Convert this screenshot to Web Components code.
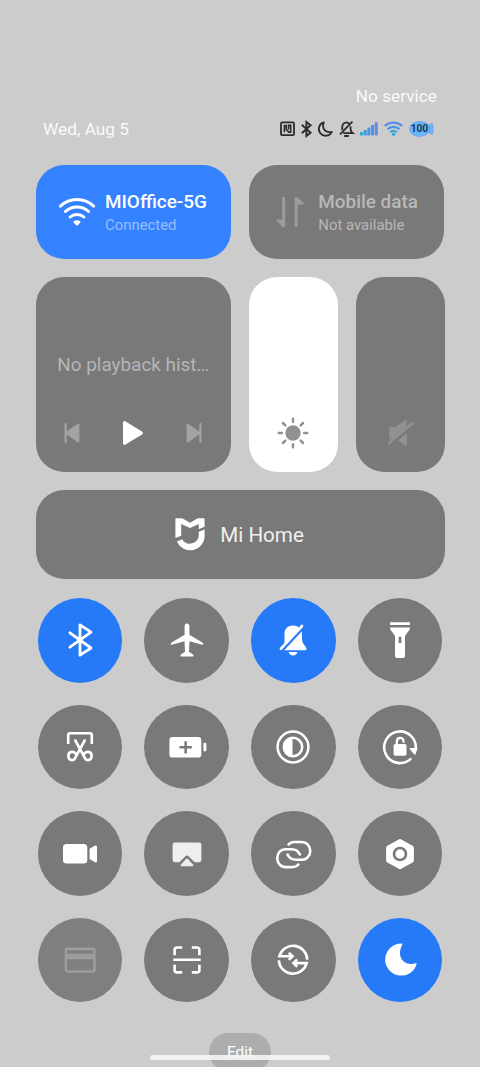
<!DOCTYPE html>
<html lang="en">
<head>
<meta charset="utf-8">
<title>Control center</title>
<style>
html,body{margin:0;padding:0;background:#ccc}
body{width:480px;height:1067px;overflow:hidden;font-family:Roboto,"Noto Sans",sans-serif}
</style>
</head>
<body>
<control-center></control-center>
<script>
const ICONS = {
  wifi:`<g fill="none" stroke="currentColor" stroke-width="3" stroke-linecap="round"><path d="M-16.6-5.9A24.2 24.2 0 0 1 16.6-5.9M-11.6-.5A17 17 0 0 1 11.6-.5M-6.9 5A10.4 10.4 0 0 1 6.9 5"/></g><path d="M-3.3 9.3Q0 7.2 3.3 9.3Q3.8 10 3.2 10.8L.8 13.2Q0 13.8-.8 13.2L-3.2 10.8Q-3.8 10-3.3 9.3z"/>`,
  data:`<path d="M-7.8-14.6q0-.7 1.5-.7t1.5.7V14.2q0 .9-1.4.9h-1.3L-13.6 8.6q-.8-1 .4-1.2h5.4zM4.7 14.4q0 .7 1.5.7t1.5-.7V-7.6h5.6q1-.3.3-1.3L7.4-14.7q-.4-.6-1.3-.6t-1.4.9z"/>`,
  prev:`<path d="M-7.5-8.9q0-1 1.1-1t1.1 1v7.5L5.8-9.2q1.5-.7 1.6.9V8.3q-.1 1.6-1.6.9L-5.3 1.6v7.5q0 1-1.1 1t-1.1-1z"/>`,
  play:`<path d="M-10-10.5Q-9.8-12.4-7.8-11.8L9-1.4Q11 0 9 1.4L-7.8 11.8Q-9.8 12.4-10 10.5z"/>`,
  sun:`<circle r="7.7"/><g stroke="currentColor" stroke-width="2.5" stroke-linecap="round"><path d="M0-11.2V-14.2M0 11.2V14.2M-11.2 0H-14.2M11.2 0H14.2M7.7-7.7 10-10M-7.7-7.7-10-10M7.7 7.7 10 10M-7.7 7.7-10 10"/></g>`,
  mute:`<path d="M-10.8-4.5Q-10.8-6.3-9-6.3H-4.3L5.3-12.8Q6.7-13.3 6.7-11.7V-6L-8.2 6.8Q-10.8 6.8-10.8 4zM6.7-.3V12q0 1.6-1.4.8L-2 7.3z"/><path d="M-11.2 10.3 12.3-9.7" stroke="currentColor" stroke-width="2.5" stroke-linecap="round"/>`,
  mi:`<path d="M-14.6-14.8Q-14.6-15.8-13.5-15.8H-9Q-8-15.8-7.3-15.4L0-11.3 7.3-15.4Q8-15.8 9-15.8H13.5Q14.6-15.8 14.6-14.8V-7.2L8.8-4.8V-10L0-5.9-8.8-10V1.8L-14.6 4.1z"/><path d="M14.6-4.5V1.2A14.4 14.4 0 0 1-13 7.6L-7.9 5.2A9 9 0 0 0 8.8.9V-2.2z"/>`,
  bluetooth:`<path d="M-10.1-7.2 11 8 0 15.2V-15.2L11-7.8-10.1 7.2" fill="none" stroke="currentColor" stroke-width="2.8" stroke-linejoin="round" stroke-linecap="round"/>`,
  plane:`<path d="M0-16.6Q2.4-16.6 2.4-13.7V-5.3L15.4 2.5Q16.7 3.5 16.2 5.1L2.5 1.3 2 11.8 6 14.5Q6.9 15.4 6.4 16.5H-6.4Q-6.9 15.4-6 14.5L-2 11.8-2.5 1.3-16.2 5.1Q-16.7 3.5-15.4 2.5L-2.4-5.3V-13.7Q-2.4-16.6 0-16.6z"/>`,
  scissors:`<g fill="none" stroke="currentColor" stroke-width="2.6" stroke-linecap="round"><path stroke-linecap="butt" d="M-11.8-3V-11.8Q-11.8-13.8-9.8-13.8H9.8Q11.8-13.8 11.8-11.8V-3"/><path d="M-4.7-6.5 3.2 7.8M4.7-6.5-3.2 7.8"/><path d="M3.4 7.8Q5.2 4.6 8.3 4.9C12.8 5.4 12.8 12.6 8 13.2C5 13.4 4.4 10.2 3.4 7.8zM-3.4 7.8Q-5.2 4.6-8.3 4.9C-12.8 5.4-12.8 12.6-8 13.2C-5 13.4-4.4 10.2-3.4 7.8z"/></g>`,
  battery:`<path fill-rule="evenodd" d="M-14.4-10H11Q14.3-10 14.3-6.8V7.4Q14.3 10.6 11 10.6H-14.4Q-17.6 10.6-17.6 7.4V-6.8Q-17.6-10-14.4-10zM-2.6-5.7V-.9H-7.5V1.6H-2.6V6.5H-.1V1.6H4.8V-.9H-.1V-5.7z"/><rect x="16.4" y="-4.2" width="3" height="8.6" rx="1.3"/>`,
  bell:`<path d="M6.2-12.3Q4-14.4 0-14.4C-5.8-14.4-8.5-10.8-8.5-6V4.5zM8.9-8.7V-1.5Q9 3 12.7 6.7Q13.8 8 13.3 9.7Q13.2 10.2 12.4 10.2H-8.7z"/><path d="M-12 8.7 9-14" fill="none" stroke="currentColor" stroke-width="2.7" stroke-linecap="round"/><path d="M-4.4 12H4.4Q3.5 15.4 0 15.4T-4.4 12z"/>`,
  torch:`<path fill-rule="evenodd" d="M-10-17.7H10V-14.9H-10zM-10-12.6H10Q10.1-10.5 8.6-9L5.8-5.3Q5-4 5-2.5V16Q5 18 3 18H-3Q-5 18-5 16V-2.5Q-5-4-5.8-5.3L-8.6-9Q-10.1-10.5-10-12.6zM-1.3-3.2V2.9H1.3V-3.2z"/>`,
  contrast:`<g fill="none" stroke="currentColor" stroke-width="2.5"><circle r="15.4"/><circle r="9.2"/></g><path d="M-.5-9.4V9.4A9.4 9.4 0 0 1-.5-9.4z"/>`,
  rotate:`<path d="M15.7 2A15.8 15.8 0 1 0 11.3 11.3" fill="none" stroke="currentColor" stroke-width="2.6"/><path d="M9.8 1H17.7L15.4 7.5Q15 8.2 14.3 7.5L9.6 2Q9.2 1.3 9.8 1z"/><rect x="-6.4" y="-3" width="12.9" height="11.8" rx="1.8"/><path d="M-3.2-2V-5.4Q-3-9.2.2-9.2T3.6-5.2" fill="none" stroke="currentColor" stroke-width="2.3" stroke-linecap="round"/>`,
  video:`<rect x="-17" y="-10" width="24.3" height="19.6" rx="3.6"/><path d="M9.6-5.3 15-8.5Q17-9 17-7.3V7Q17 8.9 15 8.2L9.6 4.9z"/>`,
  airplay:`<path d="M-12.2-11.4H12.2Q14.4-11.4 14.4-9.2V6Q14.4 8.2 12.2 8.2H7.6L1.3 2Q0 1.1-1.3 2L-7.6 8.2H-12.2Q-14.4 8.2-14.4 6V-9.2Q-14.4-11.4-12.2-11.4z"/><path d="M-.8 4.8Q0 4.1.8 4.8L6.2 10.8Q6.8 12.3 5.4 12.3H-5.4Q-6.8 12.3-6.2 10.8z"/>`,
  card:`<rect x="-14.1" y="-11.1" width="28.5" height="22.6" rx="2" fill="none" stroke="currentColor" stroke-width="2.6"/><rect x="-13" y="-6.3" width="26.5" height="5.6"/>`,
  scan:`<g fill="none" stroke="currentColor" stroke-width="2.6"><path d="M-12.4-4.8V-10Q-12.4-12.5-9.9-12.5H-4.8M12.4-4.8V-10Q12.4-12.5 9.9-12.5H4.8M-12.4 4.8V9.9Q-12.4 12.4-9.9 12.4H-4.8M12.4 4.8V9.9Q12.4 12.4 9.9 12.4H4.8M-13.7-.2H13.7"/></g>`,
  link:`<path d="M6 9.6Q3.8 13.1-1 13.1H-7C-18.5 13.1-18.8-4.8-7-4.8H-1.5C3.5-4.8 4.5-3.2 7.6 1.2M-5-8.6Q-3-12 1.5-12H8C20.5-12 20.2 5.8 8 5.8H3.5C-2 5.8-3.8 3.8-6-.4" fill="none" stroke="currentColor" stroke-width="2.6"/>`,
  nut:`<path fill-rule="evenodd" d="M-1.3-14.5Q0-15.3 1.3-14.5L12.6-8.3Q13.9-7.5 13.9-6V6.4Q13.9 7.8 12.6 8.5L1.3 14.8Q0 15.5-1.3 14.8L-12.6 8.5Q-13.9 7.8-13.9 6.4V-6Q-13.9-7.5-12.6-8.3zM0-7.3A7.3 7.3 0 1 0 0 7.3 7.3 7.3 0 1 0 0-7.3z"/><circle r="4.7"/>`,
  sync:`<path d="M14.2-.4A14.2 14.2 0 0 0-13.7-3.7H-.8M-4.2-7.3-.4-3.7-4.2-.1M-14.2.4A14.2 14.2 0 0 0 13.7 3.1H.8M4.2-.5.4 3.1 4.2 6.7" fill="none" stroke="currentColor" stroke-width="2.6"/>`,
  moon:`<path d="M1.6-16.4Q2.9-16.4 2.3-15.2C-4.3-3.5 4.3 7 15.4 3.2Q16.9 2.9 16.5 4.4A16 16 0 1 1 1.6-16.4z"/>`
};

const define = (name, css, html) => customElements.define(name, class extends HTMLElement {
  connectedCallback() {
    if (this.shadowRoot) return;
    const root = this.attachShadow({mode: 'open'});
    const t = document.createElement('template');
    t.innerHTML = `<style>${css}</style>${typeof html === 'function' ? html(this) : html}`;
    root.append(t.content.cloneNode(true));
  }
});

define('cc-icon', `:host{display:block;width:40px;height:40px;flex:none}svg{display:block;width:100%;height:100%;fill:currentColor;overflow:visible}`,
  el => `<svg viewBox="-20 -20 40 40">${ICONS[el.getAttribute('name')]}</svg>`);

define('cc-toggle', `:host{display:grid;place-items:center;width:84.6px;height:84.6px;border-radius:50%;background:#797979;color:#fff}
  :host([on]){background:#277af7}:host([disabled]){background:#7f7f7f;color:#9d9d9d}:host([soft]){color:#eee}`,
  el => `<cc-icon name="${el.getAttribute('icon')}"></cc-icon>`);

define('cc-tile', `:host{display:flex;align-items:center;box-sizing:border-box;height:94.6px;border-radius:28px;background:#797979;color:#b8b8b8;padding-left:21px}
  :host([on]){background:#3482ff;color:#fff}
  cc-icon{color:#9c9c9c}:host([on]) cc-icon{color:#fff}
  .t{display:flex;flex-direction:column;margin:3px 0 0 8.5px;white-space:nowrap}
  .a{font-size:18.9px;font-weight:500;line-height:24px}
  .b{font-size:14.9px;line-height:22px}
  :host([on]) .b{color:#97beff}`,
  el => `<cc-icon name="${el.getAttribute('icon')}"></cc-icon><div class="t"><span class="a"><slot></slot></span><span class="b"><slot name="sub"></slot></span></div>`);

define('cc-player', `:host{display:flex;flex-direction:column;box-sizing:border-box;height:195.4px;border-radius:28px;background:#797979;color:#b5b5b5;padding-top:76px}
  .m{padding-left:21.8px;font-size:18.9px;line-height:24px;white-space:nowrap}
  .c{display:flex;justify-content:space-between;padding:0 17px 0 16.5px;margin-top:36.5px;color:#a3a3a3}
  .n{transform:scaleX(-1)}.p{color:#fff}`,
  `<div class="m"><slot></slot></div><div class="c"><cc-icon name="prev"></cc-icon><cc-icon class="p" name="play"></cc-icon><cc-icon class="n" name="prev"></cc-icon></div>`);

define('cc-slider', `:host{display:flex;flex-direction:column;justify-content:flex-end;align-items:center;box-sizing:border-box;height:195.4px;border-radius:28px;background:#797979;color:#919191;padding-bottom:18.8px}
  :host([full]){background:#fff}`,
  el => `<cc-icon name="${el.getAttribute('icon')}"></cc-icon>`);

define('cc-home', `:host{display:flex;align-items:center;box-sizing:border-box;padding-left:134.5px;height:89.2px;border-radius:28px;background:#797979;color:#fff;font-size:20.6px}
  span{margin:2px 0 0 10.3px;color:#f0f0f0}`,
  `<cc-icon name="mi"></cc-icon><span><slot></slot></span>`);

define('cc-status', `:host{display:block;color:#fafafa;padding:0 7.5px;height:164.6px;box-sizing:border-box;padding-top:84px;white-space:nowrap}
  .s{text-align:right;font-size:17.3px;line-height:25px}
  .d{display:flex;align-items:center;justify-content:space-between;margin-top:7px;height:26px;font-size:17.3px}
  .i{display:flex;align-items:center;margin-right:3.8px;color:#2c2c2c}
  svg{display:block;fill:none;stroke:currentColor;height:18px;flex:none;overflow:visible}
  .l{display:grid;place-items:center;width:24.6px;height:18px;margin-left:6px}
  .l svg{grid-area:1/1}
  .l b{grid-area:1/1;z-index:1;font-size:10.2px;line-height:18px;font-weight:700;color:#1c3950;margin-right:3px}`,
  `<div class="s"><slot name="carrier"></slot></div>
  <div class="d"><span><slot name="date"></slot></span><div class="i">
   <svg width="15" viewBox="0 0 15 18"><rect x="1" y="2.4" width="13" height="12.8" rx="1.3" stroke-width="1.8"/><path d="M4.4 12.3V5.6H6.3V9.5L8.8 12.1H10.7V5.4H8.6V9.6" stroke-width="1.6"/></svg>
   <svg width="11" viewBox="0 0 11 18" style="margin-left:6.2px"><path d="M.8 4.8 9.6 12.8 5.4 16V2L9.6 5.2.8 13.2" stroke-width="1.9"/></svg>
   <svg width="15" viewBox="0 0 15 18" style="margin-left:6.1px"><path d="M5.8 2.4C3.5 9 7.7 13.3 13.8 11.8A6.8 6.8 0 1 1 5.8 2.4z" stroke-width="1.8" stroke-linejoin="round"/></svg>
   <svg width="15" viewBox="0 0 15 18" style="margin-left:6.2px"><path d="M3.2 10V7.5C3.2 2 8.4 1.6 10.2 3.8M11.6 6.3V9.2Q11.7 11.5 13.8 13.2H4.2M1 14.3 13.4 1.7M5.2 16H9.8" stroke-width="1.8"/></svg>
   <svg width="18" viewBox="0 0 18 18" style="margin-left:5.9px"><g fill="#4793e5" stroke="none"><rect x="0" y="12.2" width="3" height="3.2" fill="#31a5db"/><rect x="3.7" y="10" width="3" height="5.4" fill="#3b9ce0"/><rect x="7.4" y="7.6" width="3" height="7.8"/><rect x="11.1" y="5" width="3" height="10.4" fill="#558ce6"/><rect x="14.8" y="2.3" width="3" height="13.1" fill="#6289e5"/></g></svg>
   <svg width="19" viewBox="0 0 19 18" style="margin-left:5.6px"><path d="M.7 6A13 13 0 0 1 18.3 6" stroke="#5d8ce8" stroke-width="2.3"/><path d="M3.5 9.2A9 9 0 0 1 15.5 9.2" stroke="#4695e8" stroke-width="2.3"/><path d="M6.2 12.2A5 5 0 0 1 12.8 12.2" stroke="#319fe4" stroke-width="2.1"/><circle cx="9.5" cy="14.2" r="1.6" fill="#25a5df" stroke="none"/></svg>
   <div class="l"><svg width="24.6" viewBox="0 0 24.6 18"><path d="M20 5.2 22.3 3.5Q24 3 24 5V12.8Q24 15 22.3 14.2L20 12.4Q16.8 16.3 10.3 16.3C4.5 16.3.7 13 .7 8.9S4.5 1.5 10.3 1.5Q16.8 1.5 20 5.2z" fill="#67b6fb" stroke="#7aa4ec" stroke-width="1"/><path d="M20.2 5.3V12.3" stroke="#5b9fec" stroke-width="1"/></svg><b>100</b></div>
  </div></div>`);

define('cc-edit', `:host{display:block;align-self:center;width:62px;height:38px;border-radius:19px;background:#adadad;color:#fff;text-align:center;font-size:15.4px;line-height:38px}`, `<slot></slot>`);

define('control-center', `:host{display:flex;flex-direction:column;position:relative;width:480px;height:1067px;overflow:hidden;background:#ccc;box-sizing:border-box;padding:0 35.5px}
  .r{display:grid;column-gap:17.7px;margin-bottom:17.5px;grid-template-columns:195.6px 195.6px;flex:none}
  .m{grid-template-columns:195.6px 89.2px 89px}
  cc-status,cc-home,cc-edit{flex:none}
  .g{display:grid;grid-template-columns:repeat(4,84.6px);gap:22.05px;margin:19.2px 0 30.2px 2.2px;flex:none}
  .bar{position:absolute;left:150.3px;top:1055.2px;width:179.4px;height:4.8px;border-radius:3px;background:rgba(247,247,247,.88)}`,
  `<cc-status><span slot="carrier">No service</span><span slot="date">Wed, Aug 5</span></cc-status>
  <div class="r"><cc-tile on icon="wifi">MIOffice-5G<span slot="sub">Connected</span></cc-tile><cc-tile icon="data">Mobile data<span slot="sub">Not available</span></cc-tile></div>
  <div class="r m"><cc-player>No playback hist…</cc-player><cc-slider full icon="sun"></cc-slider><cc-slider icon="mute"></cc-slider></div>
  <cc-home>Mi Home</cc-home>
  <div class="g">
   <cc-toggle on icon="bluetooth"></cc-toggle><cc-toggle icon="plane"></cc-toggle><cc-toggle on icon="bell"></cc-toggle><cc-toggle icon="torch"></cc-toggle>
   <cc-toggle icon="scissors"></cc-toggle><cc-toggle icon="battery"></cc-toggle><cc-toggle icon="contrast"></cc-toggle><cc-toggle icon="rotate"></cc-toggle>
   <cc-toggle icon="video"></cc-toggle><cc-toggle soft icon="airplay"></cc-toggle><cc-toggle icon="link"></cc-toggle><cc-toggle icon="nut"></cc-toggle>
   <cc-toggle disabled icon="card"></cc-toggle><cc-toggle icon="scan"></cc-toggle><cc-toggle icon="sync"></cc-toggle><cc-toggle on icon="moon"></cc-toggle>
  </div>
  <cc-edit>Edit</cc-edit><div class="bar"></div>`);
</script>
</body>
</html>
